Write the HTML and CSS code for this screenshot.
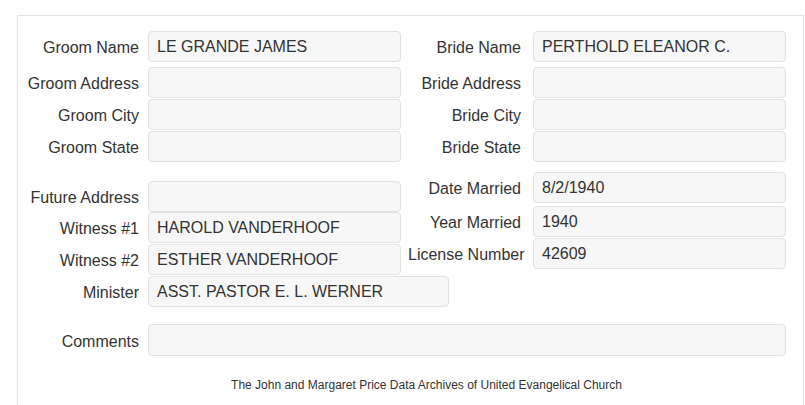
FILE: index.html
```html
<!DOCTYPE html>
<html>
<head>
  <title>Marriage Record</title>
  <meta name="viewport" content="width=device-width, initial-scale=1">
  <link rel="stylesheet" href="styles.css">
</head>
<body>
  <div class="panel">
    <div class="section top">
      <div class="col left">
        <div class="row first"><label>Groom Name</label><input type="text" readonly value="LE GRANDE JAMES"></div>
        <div class="row"><label>Groom Address</label><input type="text" readonly value=""></div>
        <div class="row"><label>Groom City</label><input type="text" readonly value=""></div>
        <div class="row"><label>Groom State</label><input type="text" readonly value=""></div>
      </div>
      <div class="col right">
        <div class="row first"><label>Bride Name</label><input type="text" readonly value="PERTHOLD ELEANOR C."></div>
        <div class="row"><label>Bride Address</label><input type="text" readonly value=""></div>
        <div class="row"><label>Bride City</label><input type="text" readonly value=""></div>
        <div class="row"><label>Bride State</label><input type="text" readonly value=""></div>
      </div>
    </div>
    <div class="section middle">
      <div class="col left lower">
        <div class="row tight"><label>Future Address</label><input type="text" readonly value=""></div>
        <div class="row"><label>Witness #1</label><input type="text" readonly value="HAROLD VANDERHOOF"></div>
        <div class="row"><label>Witness #2</label><input type="text" readonly value="ESTHER VANDERHOOF"></div>
        <div class="row"><label>Minister</label><input type="text" class="short" readonly value="ASST. PASTOR E. L. WERNER"></div>
      </div>
      <div class="col right upper">
        <div class="row loose"><label>Date Married</label><input type="text" readonly value="8/2/1940"></div>
        <div class="row"><label>Year Married</label><input type="text" readonly value="1940"></div>
        <div class="row"><label class="wide">License Number</label><input type="text" readonly value="42609"></div>
      </div>
    </div>
    <div class="comments">
      <label>Comments</label><input type="text" readonly value="">
    </div>
    <p class="footer">The John and Margaret Price Data Archives of United Evangelical Church</p>
  </div>
</body>
</html>
```

FILE: styles.css
```css
html {
  font-family: "Liberation Sans", Arial, Helvetica, sans-serif;
  color: #333;
}

body {
  margin: 0;
  background: #fff;
}

.panel {
  margin: 15px 1px 0 17px;
  padding: 15px 0 30px 0;
  border: 1px solid #e3e3e3;
  border-bottom: none;
  height: 400px;
  box-sizing: border-box;
}

.section {
  display: flex;
  gap: 10px;
}

.col {
  display: flex;
  flex-direction: column;
  gap: 1px;
}

.col.left {
  width: 383px;
}

.col.right {
  width: 375px;
}

.middle .lower {
  margin-top: 19px;
}

.middle .upper {
  margin-top: 10px;
}

.row {
  display: flex;
  align-items: center;
  height: 31px;
}

.row.first {
  margin-bottom: 4px;
}

.row.tight {
  margin-bottom: -1px;
}

.row.loose {
  margin-bottom: 2px;
}

label {
  flex: none;
  text-align: right;
  font-size: 16px;
  padding-top: 3px;
  white-space: nowrap;
}

.left label {
  width: 121px;
  margin-right: 9px;
}

.right label {
  width: 110px;
  margin-right: 12px;
}

.right label.wide {
  width: 116px;
  margin-left: -3px;
  margin-right: 9px;
}

input {
  flex: none;
  box-sizing: border-box;
  width: 253px;
  height: 31px;
  padding: 1px 8px 0 8px;
  font-family: inherit;
  font-size: 16px;
  color: #333;
  background: #f7f7f7;
  border: 1px solid #e2e2e2;
  border-radius: 4px;
  outline: none;
}

input.short {
  width: 301px;
}

.comments {
  display: flex;
  align-items: center;
  margin-top: 17px;
  height: 32px;
}

.comments label {
  width: 121px;
  margin-right: 9px;
}

.comments input {
  width: 638px;
  height: 32px;
}

.footer {
  margin: 21px 0 0 0;
  padding-left: 32px;
  font-size: 12px;
  line-height: 17px;
  text-align: center;
}
```
